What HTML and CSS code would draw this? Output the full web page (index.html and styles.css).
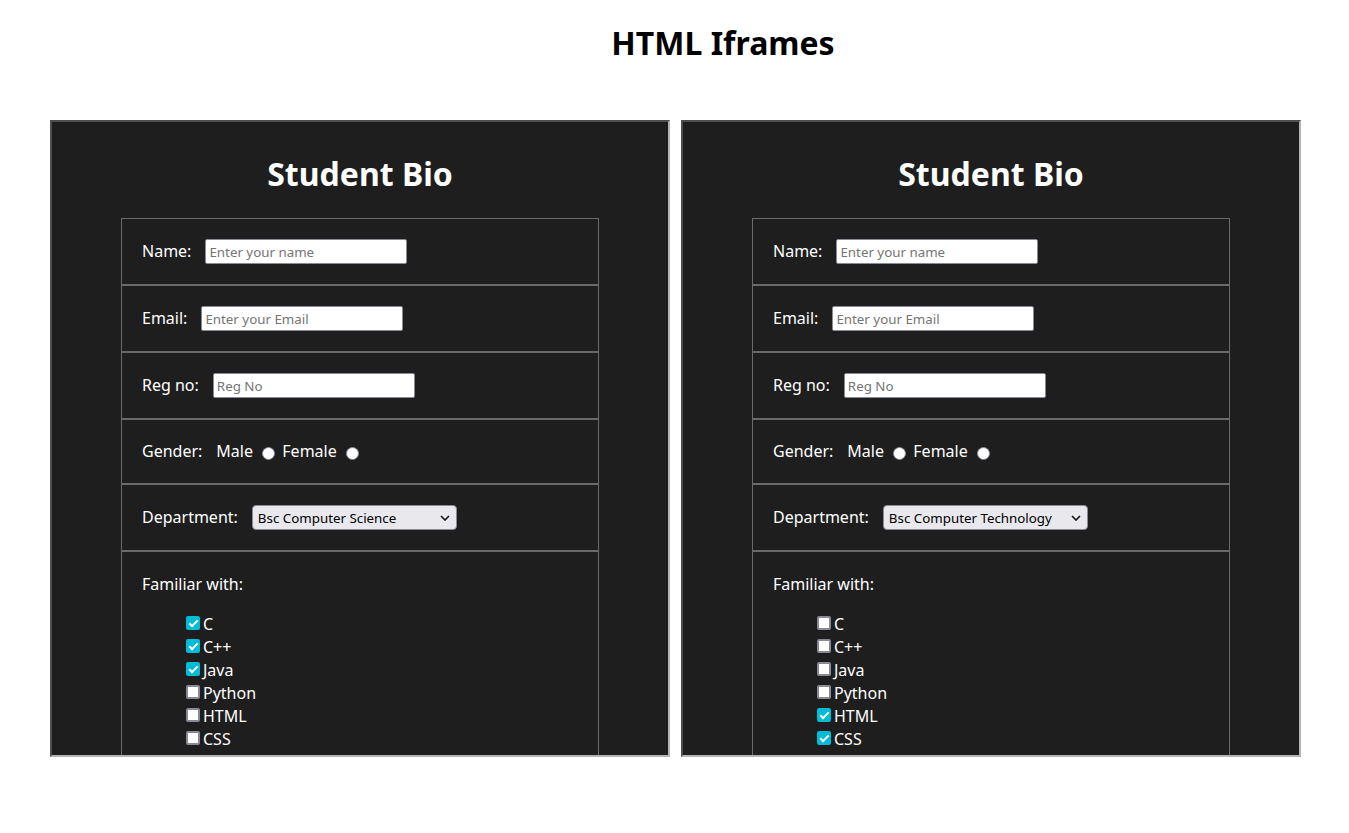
FILE: index.html
```html
<!DOCTYPE html>
<html lang="en">
<head>
<meta charset="utf-8">
<title>HTML Iframes</title>
<link rel="stylesheet" href="styles.css">
</head>
<body>
<h1 class="page-title">HTML Iframes</h1>
<div class="frames">
  <div class="frame">
    <div class="frame-body">
      <h1 class="bio-title">Student Bio</h1>
      <div class="form-box">
        <div class="row"><span class="lbl">Name:</span><input type="text" placeholder="Enter your name"></div>
        <div class="row"><span class="lbl">Email:</span><input type="text" placeholder="Enter your Email"></div>
        <div class="row"><span class="lbl">Reg no:</span><input type="text" placeholder="Reg No"></div>
        <div class="row"><span class="lbl">Gender:</span><span class="opts">Male <input type="radio" name="g1"> Female <input type="radio" name="g1"></span></div>
        <div class="row"><span class="lbl">Department:</span><span class="sel"><select><option>Bsc Computer Science</option><option>Bsc Computer Technology</option></select><svg class="chev" width="10" height="6" viewBox="0 0 10 6"><path d="M1 1l4 4 4-4" fill="none" stroke="#111" stroke-width="1.6"/></svg></span></div>
        <div class="row row-block">
          <div class="lbl-line">Familiar with:</div>
          <ul class="skills">
            <li><input type="checkbox" checked>C</li>
            <li><input type="checkbox" checked>C++</li>
            <li><input type="checkbox" checked>Java</li>
            <li><input type="checkbox">Python</li>
            <li><input type="checkbox">HTML</li>
            <li><input type="checkbox">CSS</li>
          </ul>
        </div>
      </div>
    </div>
  </div>
  <div class="frame">
    <div class="frame-body">
      <h1 class="bio-title">Student Bio</h1>
      <div class="form-box">
        <div class="row"><span class="lbl">Name:</span><input type="text" placeholder="Enter your name"></div>
        <div class="row"><span class="lbl">Email:</span><input type="text" placeholder="Enter your Email"></div>
        <div class="row"><span class="lbl">Reg no:</span><input type="text" placeholder="Reg No"></div>
        <div class="row"><span class="lbl">Gender:</span><span class="opts">Male <input type="radio" name="g2"> Female <input type="radio" name="g2"></span></div>
        <div class="row"><span class="lbl">Department:</span><span class="sel"><select><option>Bsc Computer Technology</option><option>Bsc Computer Science</option></select><svg class="chev" width="10" height="6" viewBox="0 0 10 6"><path d="M1 1l4 4 4-4" fill="none" stroke="#111" stroke-width="1.6"/></svg></span></div>
        <div class="row row-block">
          <div class="lbl-line">Familiar with:</div>
          <ul class="skills">
            <li><input type="checkbox">C</li>
            <li><input type="checkbox">C++</li>
            <li><input type="checkbox">Java</li>
            <li><input type="checkbox">Python</li>
            <li><input type="checkbox" checked>HTML</li>
            <li><input type="checkbox" checked>CSS</li>
          </ul>
        </div>
      </div>
    </div>
  </div>
</div>
</body>
</html>
```
FILE: styles.css
```css
html, body {
  margin: 0;
  padding: 0;
  background: #ffffff;
}

body {
  font-family: "Noto Sans", "Open Sans", sans-serif;
  color: #000;
}

.page-title {
  margin: 21px 0 0;
  padding-left: 97px;
  font-size: 32px;
  line-height: 44px;
  font-weight: 700;
  text-align: center;
}

.frames {
  display: flex;
  gap: 11px;
  margin-top: 55px;
  padding-left: 50px;
}

.frame {
  width: 620px;
  height: 637px;
  box-sizing: border-box;
  border-width: 2px;
  border-style: solid;
  border-color: #4e4e4e #b4b4b4 #b4b4b4 #4e4e4e;
  flex: none;
}

.frame-body {
  height: 100%;
  box-sizing: border-box;
  overflow: hidden;
  padding: 8px;
  background: #1e1e1e;
  color: #ffffff;
  font-size: 16px;
  line-height: 23px;
}

.bio-title {
  margin: 22px 0;
  font-size: 32px;
  line-height: 44px;
  font-weight: 700;
  text-align: center;
}

.form-box {
  width: 478px;
  margin: 0 auto;
}

.row {
  display: flex;
  align-items: center;
  border: 1px solid #6a6a6a;
  padding: 20px;
}

.row-block {
  display: block;
  padding-top: 21px;
}

.lbl {
  margin-right: 14px;
}

.opts {
  white-space: nowrap;
}

input[type="text"] {
  appearance: none;
  width: 202px;
  height: 25px;
  box-sizing: border-box;
  margin: 0;
  padding: 1px 3px;
  border: 1px solid #8a8a96;
  border-radius: 2px;
  background: #ffffff;
  color: #000;
  font-family: "Noto Sans", "Open Sans", sans-serif;
  font-size: 13.33px;
}

input[type="text"]::placeholder {
  color: #757575;
}

input[type="radio"] {
  appearance: none;
  width: 13px;
  height: 13px;
  box-sizing: border-box;
  margin: 0 3px 0 5px;
  border: 1.5px solid #8a8a96;
  border-radius: 50%;
  background: #ffffff;
  vertical-align: -3px;
}

.sel {
  position: relative;
  display: inline-block;
}

select {
  appearance: none;
  display: block;
  width: 205px;
  height: 25px;
  box-sizing: border-box;
  margin: 0;
  padding: 0 20px 0 5px;
  border: 1px solid #8a8a96;
  border-radius: 4px;
  background: #e9e9ed;
  color: #000;
  font-family: "Noto Sans", "Open Sans", sans-serif;
  font-size: 13.33px;
}

.chev {
  position: absolute;
  right: 7px;
  top: 10px;
  pointer-events: none;
}

.skills {
  list-style: none;
  margin: 17px 0 16px;
  padding-left: 40px;
}

.skills input {
  appearance: none;
  position: relative;
  width: 14px;
  height: 14px;
  box-sizing: border-box;
  margin: 3px 3px 3px 4px;
  border: 2px solid #8a8a96;
  border-radius: 2px;
  background: #ffffff;
  vertical-align: -3px;
}

.skills input:checked {
  background: #00bcd4;
  border-color: #00bcd4;
}

.skills input:checked::after {
  content: "";
  position: absolute;
  left: 3px;
  top: 0px;
  width: 3px;
  height: 7px;
  border: solid #ffffff;
  border-width: 0 2px 2px 0;
  transform: rotate(45deg);
}
```
